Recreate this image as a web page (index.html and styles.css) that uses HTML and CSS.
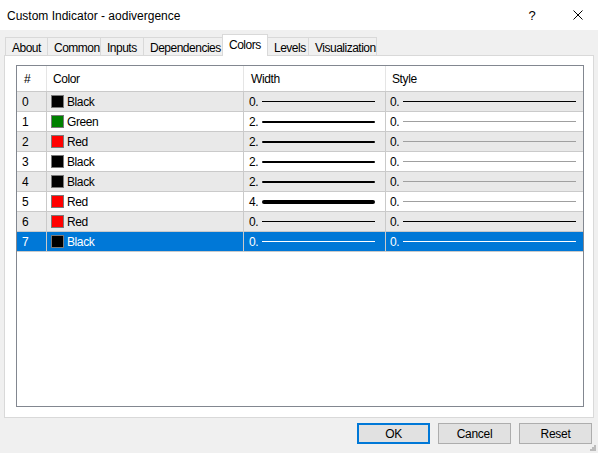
FILE: index.html
```html
<!DOCTYPE html>
<html>
<head>
<meta charset="utf-8">
<link rel="stylesheet" href="styles.css">
</head>
<body>
<div class="window">
  <div class="titlebar">
    <div class="title">Custom Indicator - aodivergence</div>
    <div class="tb-help">?</div>
    <div class="tb-close">
      <svg width="10" height="10" viewBox="0 0 10 10"><path d="M0.5 0.5 L9.5 9.5 M9.5 0.5 L0.5 9.5" stroke="#000" stroke-width="1" fill="none"/></svg>
    </div>
  </div>
  <div class="content">
    <div class="tabs">
      <div class="tab t-about">About</div>
      <div class="tab t-common">Common</div>
      <div class="tab t-inputs">Inputs</div>
      <div class="tab t-dep">Dependencies</div>
      <div class="tab active t-colors">Colors</div>
      <div class="tab t-levels">Levels</div>
      <div class="tab last t-vis">Visualization</div>
    </div>
    <div class="panel">
      <div class="grid">
        <div class="row head">
          <div class="cell c-num">#</div>
          <div class="cell c-color">Color</div>
          <div class="cell c-width">Width</div>
          <div class="cell c-style">Style</div>
        </div>
        <div class="row alt">
          <div class="cell c-num">0</div>
          <div class="cell c-color"><span class="sw black"></span>Black</div>
          <div class="cell c-width"><span class="val">0.</span><span class="ln w0"></span></div>
          <div class="cell c-style"><span class="val">0.</span><span class="ln s-dark"></span></div>
        </div>
        <div class="row">
          <div class="cell c-num">1</div>
          <div class="cell c-color"><span class="sw green"></span>Green</div>
          <div class="cell c-width"><span class="val">2.</span><span class="ln w2"></span></div>
          <div class="cell c-style"><span class="val">0.</span><span class="ln s-gray"></span></div>
        </div>
        <div class="row alt">
          <div class="cell c-num">2</div>
          <div class="cell c-color"><span class="sw red"></span>Red</div>
          <div class="cell c-width"><span class="val">2.</span><span class="ln w2"></span></div>
          <div class="cell c-style"><span class="val">0.</span><span class="ln s-gray"></span></div>
        </div>
        <div class="row">
          <div class="cell c-num">3</div>
          <div class="cell c-color"><span class="sw black"></span>Black</div>
          <div class="cell c-width"><span class="val">2.</span><span class="ln w2"></span></div>
          <div class="cell c-style"><span class="val">0.</span><span class="ln s-gray"></span></div>
        </div>
        <div class="row alt">
          <div class="cell c-num">4</div>
          <div class="cell c-color"><span class="sw black"></span>Black</div>
          <div class="cell c-width"><span class="val">2.</span><span class="ln w2"></span></div>
          <div class="cell c-style"><span class="val">0.</span><span class="ln s-gray"></span></div>
        </div>
        <div class="row">
          <div class="cell c-num">5</div>
          <div class="cell c-color"><span class="sw red"></span>Red</div>
          <div class="cell c-width"><span class="val">4.</span><span class="ln w4"></span></div>
          <div class="cell c-style"><span class="val">0.</span><span class="ln s-gray"></span></div>
        </div>
        <div class="row alt">
          <div class="cell c-num">6</div>
          <div class="cell c-color"><span class="sw red"></span>Red</div>
          <div class="cell c-width"><span class="val">0.</span><span class="ln w0"></span></div>
          <div class="cell c-style"><span class="val">0.</span><span class="ln s-dark"></span></div>
        </div>
        <div class="row sel">
          <div class="cell c-num">7</div>
          <div class="cell c-color"><span class="sw black"></span>Black</div>
          <div class="cell c-width"><span class="val">0.</span><span class="ln w0"></span></div>
          <div class="cell c-style"><span class="val">0.</span><span class="ln s-dark"></span></div>
        </div>
      </div>
    </div>
    <div class="buttons">
      <button class="btn default">OK</button>
      <button class="btn">Cancel</button>
      <button class="btn">Reset</button>
    </div>
  </div>
  <svg class="grip" width="6" height="6" viewBox="0 0 6 6">
    <rect x="4" y="0" width="2" height="2" fill="#bcbcbc"/>
    <rect x="2" y="2" width="2" height="2" fill="#bcbcbc"/>
    <rect x="4" y="2" width="2" height="2" fill="#bcbcbc"/>
    <rect x="0" y="4" width="2" height="2" fill="#bcbcbc"/>
    <rect x="2" y="4" width="2" height="2" fill="#bcbcbc"/>
    <rect x="4" y="4" width="2" height="2" fill="#bcbcbc"/>
  </svg>
</div>
</body>
</html>
```

FILE: styles.css
```css
* { box-sizing: border-box; }
html, body { margin: 0; padding: 0; }
body {
  font-family: "Liberation Sans", Arial, sans-serif;
  font-size: 12px;
  color: #000;
  background: #f0f0f0;
}
.window {
  width: 598px;
  height: 453px;
  background: #f0f0f0;
  position: relative;
  overflow: hidden;
}
.titlebar {
  height: 30px;
  background: #fff;
  display: flex;
  align-items: center;
}
.title {
  padding-left: 7px;
  font-size: 12px;
  flex: 1;
  padding-top: 1px;
}
.tb-help {
  width: 46px;
  text-align: center;
  font-size: 13px;
  padding-top: 1px;
}
.tb-close {
  width: 43px;
  display: flex;
  justify-content: center;
  padding-left: 3px;
}
.tb-close svg { display: block; }
.content {
  padding: 5px 5px 0 4px;
}
.tabs {
  display: flex;
  align-items: flex-end;
  height: 20px;
  padding-left: 1px;
  letter-spacing: -0.5px;
}
.tab {
  height: 19px;
  border: 1px solid #d9d9d9;
  border-right: none;
  border-bottom: none;
  background: #f0f0f0;
  padding: 3px 0 0 6px;
  white-space: nowrap;
  margin-bottom: -1px;
}
.tab.last { border-right: 1px solid #d9d9d9; }
.tab.active {
  height: 22px;
  background: #fff;
  border-right: 1px solid #d9d9d9;
  margin-right: -1px;
  position: relative;
  z-index: 2;
  padding-top: 3px;
}
.t-about { width: 42px; }
.t-common { width: 53px; }
.t-inputs { width: 43px; }
.t-dep { width: 79px; }
.t-colors { width: 46px; }
.t-levels { width: 41px; }
.t-vis { width: 69px; }
.panel {
  position: relative;
  z-index: 1;
  width: 590px;
  height: 363px;
  border: 1px solid #d9d9d9;
  background: #fff;
  padding: 9px 0 0 11px;
}
.grid {
  width: 568px;
  height: 342px;
  border: 1px solid #828790;
  background: #fff;
  letter-spacing: -0.4px;
}
.row {
  display: grid;
  grid-template-columns: 30px 197px 142px 197px;
  height: 20px;
  border-bottom: 1px solid #cacaca;
}
.row.alt { background: #e9e9e9; }
.row.sel { background: #0078d7; color: #fff; }
.row.head {
  height: 26px;
  background: #fff;
  border-bottom: 1px solid #cacaca;
}
.cell {
  display: flex;
  align-items: center;
  border-right: 1px solid #cacaca;
  white-space: nowrap;
  overflow: hidden;
}
.cell.c-style { border-right: none; }
.head .cell { border-right-color: #e5e5e5; }
.head .c-num { padding-left: 7px; }
.head .c-color { padding-left: 6px; }
.head .c-width { padding-left: 7px; }
.head .c-style { padding-left: 6px; }
.c-num { padding-left: 5px; }
.c-color { padding-left: 4px; }
.c-width { padding-left: 5px; padding-right: 10px; }
.c-style { padding-left: 4px; padding-right: 7px; }
.sw {
  width: 13px;
  height: 13px;
  border: 1px solid #7a7a7a;
  margin-right: 3px;
  flex: none;
}
.sw.black { background: #000; }
.sw.green { background: #008000; }
.sw.red { background: #ff0000; }
.val { width: 13px; flex: none; }
.ln { flex: 1; background: #000; }
.w0 { height: 1px; }
.w2 { height: 2px; border-radius: 1px; }
.w4 { height: 4px; border-radius: 2px; }
.s-dark { height: 1px; background: #000; }
.s-gray { height: 1px; background: #a0a0a0; }
.sel .ln { background: #fff; }
.buttons {
  display: flex;
  justify-content: flex-end;
  gap: 8px;
  margin-top: 5px;
  padding-right: 1px;
}
.btn {
  width: 73px;
  height: 21px;
  background: #e1e1e1;
  border: 1px solid #adadad;
  font-family: "Liberation Sans", Arial, sans-serif;
  font-size: 12px;
  letter-spacing: -0.3px;
  color: #000;
  padding: 0;
}
.btn.default {
  border-color: #0078d7;
  box-shadow: inset 0 0 0 1px #0078d7;
}
.grip {
  position: absolute;
  right: 2px;
  bottom: 2px;
}
```
